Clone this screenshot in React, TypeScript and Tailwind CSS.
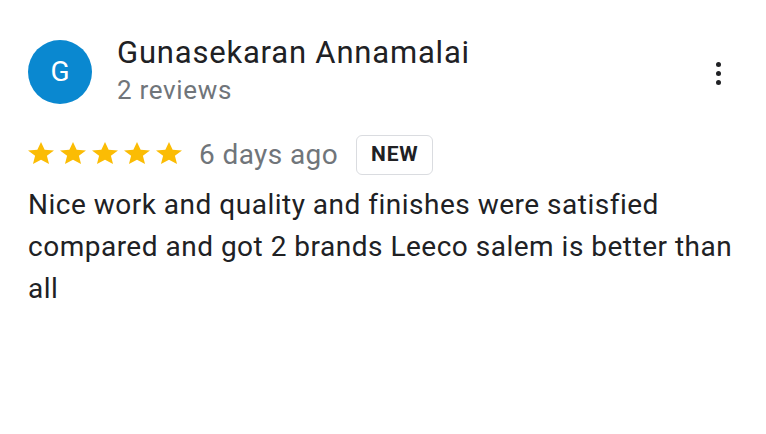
import React from "react";

const Star = () => (
  <svg width="26" height="22" viewBox="2 2 20 19" preserveAspectRatio="none" className="block">
    <path d="M12 17.27L18.18 21l-1.64-7.03L22 9.24l-7.19-.61L12 2 9.19 8.63 2 9.24l5.46 4.73L5.82 21z" fill="#fbbc04" />
  </svg>
);

export default function App() {
  return (
    <div className="w-[766px] h-[434px] bg-white" style={{ fontFamily: "Roboto, 'Liberation Sans', sans-serif" }}>
      <div className="pl-[28px] pr-[30px] pt-[40px]">
        <div className="flex items-start">
          <div className="w-[64px] h-[64px] rounded-full bg-[#0a88d0] flex items-center justify-center text-white text-[28px] shrink-0">
            G
          </div>
          <div className="ml-[25px] flex-1">
            <div className="text-[31px] leading-[26px] text-[#202124] tracking-[0.8px]">Gunasekaran Annamalai</div>
            <div className="text-[26px] leading-[26px] mt-[11px] text-[#70757a] tracking-[0.7px]">2 reviews</div>
          </div>
          <div className="mt-[22px] mr-[15px] flex flex-col gap-[4px]">
            <span className="block w-[5px] h-[5px] rounded-full bg-[#202124]" />
            <span className="block w-[5px] h-[5px] rounded-full bg-[#202124]" />
            <span className="block w-[5px] h-[5px] rounded-full bg-[#202124]" />
          </div>
        </div>
        <div className="flex items-center mt-[31px]">
          <div className="flex gap-[6px] mb-[4px]">
            <Star /><Star /><Star /><Star /><Star />
          </div>
          <span className="ml-[17px] text-[28px] leading-[32px] text-[#70757a] tracking-[0.4px]">6 days ago</span>
          <span className="ml-[18px] border border-[#dadce0] rounded-[6px] px-[14px] h-[40px] flex items-center text-[21px] font-bold tracking-[0.8px] text-[#202124]">NEW</span>
        </div>
        <p className="mt-[9px] text-[28px] leading-[42px] text-[#202124] w-[716px] tracking-[0.5px]">
          Nice work and quality and finishes were satisfied compared and got 2 brands Leeco salem is better than all
        </p>
      </div>
    </div>
  );
}
